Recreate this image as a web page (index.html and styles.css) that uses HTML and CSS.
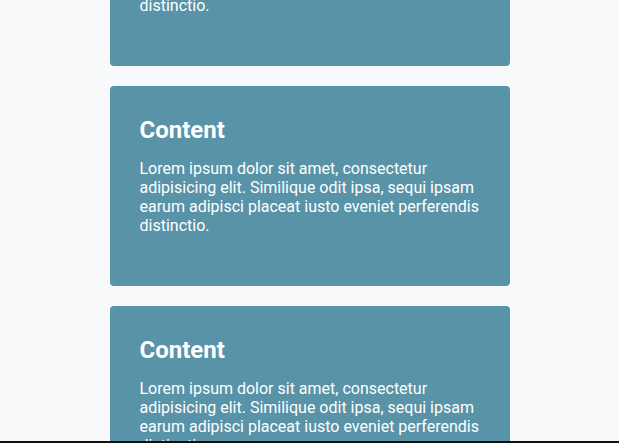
FILE: index.html
```html
<!DOCTYPE html>
<html>
<head>
<meta charset="utf-8">
<link rel="stylesheet" href="styles.css">
</head>
<body>
<main class="list">
  <section class="card">
    <h2 class="card-title">Content</h2>
    <p class="card-text">Lorem ipsum dolor sit amet, consectetur adipisicing elit. Similique odit ipsa, sequi ipsam earum adipisci placeat iusto eveniet perferendis distinctio.</p>
  </section>
  <section class="card">
    <h2 class="card-title">Content</h2>
    <p class="card-text">Lorem ipsum dolor sit amet, consectetur adipisicing elit. Similique odit ipsa, sequi ipsam earum adipisci placeat iusto eveniet perferendis distinctio.</p>
  </section>
  <section class="card">
    <h2 class="card-title">Content</h2>
    <p class="card-text">Lorem ipsum dolor sit amet, consectetur adipisicing elit. Similique odit ipsa, sequi ipsam earum adipisci placeat iusto eveniet perferendis distinctio.</p>
  </section>
</main>
<div class="bottom-edge"></div>
</body>
</html>
```
FILE: styles.css
```css
html, body {
  margin: 0;
  padding: 0;
  height: 100%;
  overflow: hidden;
  background: #f8f9fb;
}
body {
  font-family: Roboto, "Noto Sans", sans-serif;
  color: #ffffff;
}
.list {
  display: flex;
  flex-direction: column;
  align-items: center;
  gap: 20px;
  margin-top: -134px;
}
.card {
  box-sizing: border-box;
  width: 400px;
  height: 200px;
  padding: 30px;
  background: #5893a8;
  border-radius: 4px;
}
.card-title {
  margin: 0;
  font-size: 24px;
  line-height: 28px;
  font-weight: 700;
}
.card-text {
  margin: 15px 0 0;
  font-size: 16px;
  line-height: 19px;
}
.bottom-edge {
  position: fixed;
  left: 0;
  right: 0;
  bottom: 0;
  height: 2px;
  background: #111111;
}
```
